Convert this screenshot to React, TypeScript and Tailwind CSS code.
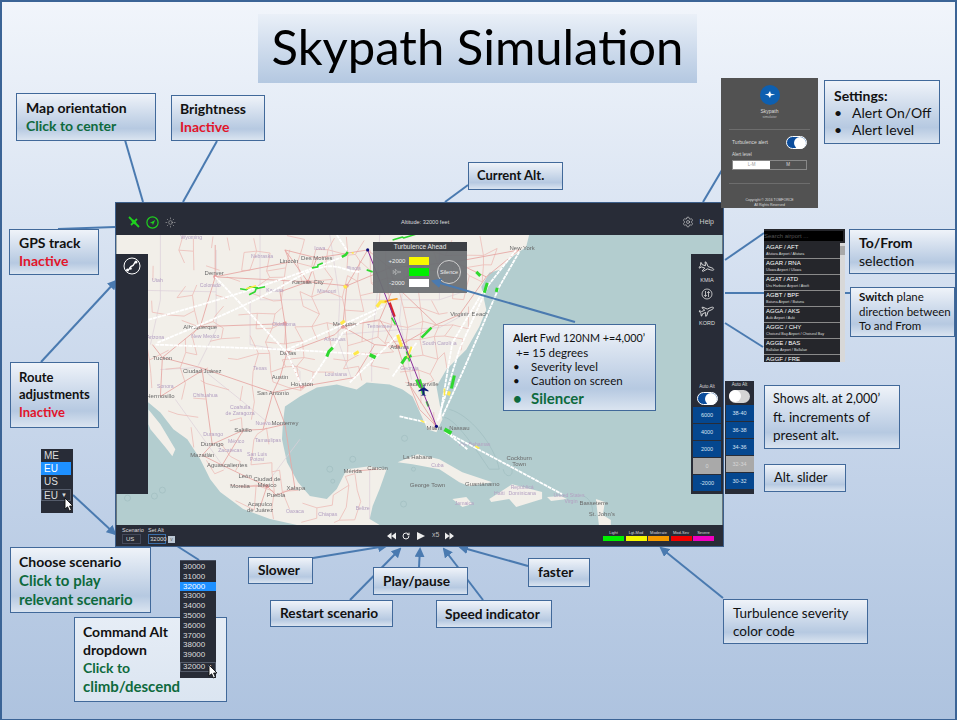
import type { ReactNode } from "react";
import { RotateCw, Settings, Sun } from "lucide-react";

const cities: Record<string, [number, number]> = {
  denver: [215, 277], lincoln: [290, 262], desmoines: [317, 258], kc: [308, 282], abq: [200, 327],
  tucson: [162, 358], phoenix: [152, 345], dallas: [287, 353], okc: [285, 324], austin: [280, 378],
  houston: [302, 387], sanantonio: [273, 393], juarez: [202, 371], hermosillo: [160, 397], saltillo: [243, 431],
  monterrey: [263, 430], durango: [212, 445], mazatlan: [202, 456], aguas: [222, 466], leon: [245, 477],
  mexico: [267, 487], morelia: [240, 487], puebla: [276, 496], xalapa: [295, 489], acapulco: [260, 508],
  reynosa: [285, 425], stlouis: [347, 286], memphis: [343, 327], nashville: [380, 320], atlanta: [398, 347],
  jax: [410, 385], neworleans: [355, 378], chicago: [368, 250], dc: [487, 277], ny: [520, 250],
  charlotte: [437, 325], raleigh: [460, 315], merida: [353, 472], cancun: [378, 470], miami: [437, 427],
  tampa: [420, 410], cheyenne: [215, 245], omaha: [285, 250], wichita: [280, 292], littlerock: [335, 335],
  birmingham: [375, 345], louisville: [395, 285], pittsburgh: [455, 262], columbus: [425, 265], indy: [390, 268],
  elpaso: [200, 368], slc: [135, 262],
};

const roads: [string, string][] = [
  ["denver", "cheyenne"], ["denver", "abq"], ["denver", "kc"], ["denver", "lincoln"], ["lincoln", "omaha"], ["omaha", "desmoines"],
  ["omaha", "kc"], ["desmoines", "chicago"], ["desmoines", "kc"], ["kc", "stlouis"], ["kc", "wichita"], ["wichita", "okc"], ["okc", "dallas"],
  ["okc", "abq"], ["abq", "tucson"], ["tucson", "phoenix"], ["tucson", "elpaso"], ["elpaso", "juarez"], ["elpaso", "sanantonio"], ["dallas", "austin"],
  ["austin", "sanantonio"], ["dallas", "houston"], ["houston", "sanantonio"], ["houston", "neworleans"], ["dallas", "littlerock"], ["littlerock", "memphis"],
  ["memphis", "stlouis"], ["memphis", "nashville"], ["memphis", "birmingham"], ["nashville", "atlanta"], ["birmingham", "atlanta"], ["neworleans", "birmingham"],
  ["atlanta", "charlotte"], ["atlanta", "jax"], ["jax", "tampa"], ["jax", "miami"], ["tampa", "miami"], ["charlotte", "raleigh"], ["raleigh", "dc"],
  ["dc", "ny"], ["dc", "pittsburgh"], ["pittsburgh", "columbus"], ["columbus", "indy"], ["indy", "stlouis"], ["indy", "chicago"], ["indy", "louisville"],
  ["louisville", "nashville"], ["louisville", "columbus"], ["stlouis", "chicago"], ["charlotte", "louisville"], ["pittsburgh", "ny"], ["sanantonio", "reynosa"],
  ["sanantonio", "monterrey"], ["monterrey", "saltillo"], ["saltillo", "durango"], ["durango", "mazatlan"], ["mazatlan", "aguas"], ["aguas", "leon"],
  ["leon", "mexico"], ["morelia", "mexico"], ["mexico", "puebla"], ["puebla", "xalapa"], ["mexico", "acapulco"], ["monterrey", "reynosa"], ["saltillo", "aguas"],
  ["hermosillo", "tucson"], ["hermosillo", "juarez"], ["juarez", "durango"], ["merida", "cancun"], ["reynosa", "xalapa"],
];

const borders = [
  "M116 290 L216 292 L216 250", "M160 235 L160 300 L150 345", "M216 292 L216 330 L198 366", "M260 235 L260 300 L290 300 L340 300",
  "M250 300 L250 345 L280 350 L300 372 L300 388", "M330 235 L340 300 L338 340 L352 380", "M160 370 L200 368 L240 400 L270 425 L283 425", "M380 235 L378 290 L372 345 L372 382",
  "M405 270 L400 320 L412 380", "M340 300 L440 300 L470 290", "M340 335 L400 330 L440 328 L470 312", "M440 250 L440 300",
  "M175 400 L225 470", "M300 440 L270 480", "M370 470 L370 520",
];

const tracks = [
  "M148 320 C 220 300 270 285 343 257", "M155 345 L287 350 L373 355", "M157 343 C 200 325 250 305 293 280 S 340 272 360 272",
  "M215 277 L287 353 L302 387", "M287 350 L383 307", "M310 383 L343 333 L377 313", "M350 383 L387 347 L400 333", "M393 377 L417 343",
  "M337 235 L347 250", "M440 420 L453 343 L483 293 L517 250", "M443 417 L463 373 L500 287 L520 252", "M438 422 L460 350 L490 283",
  "M445 432 L563 495", "M447 433 L468 450", "M400 417 L427 423",
];

const patches: { d: string; c: string; w?: number }[] = [
  { d: "M240 289 L246 290 L250 287 L258 288", c: "#2fd82f" }, { d: "M249 295 L255 292 L256 289 L265 287", c: "#2fd82f" }, { d: "M246 289 L256 286", c: "#ffe94a" },
  { d: "M312 268 L318 267 L318 265 L323 263", c: "#2fd82f" }, { d: "M342 257 L346 255 L348 252", c: "#2fd82f", w: 2.5 }, { d: "M352 253 L354 253", c: "#ffe94a" },
  { d: "M327 357 L329 352 L333 348", c: "#2fd82f", w: 3 }, { d: "M370 355 L376 358", c: "#2fd82f", w: 3.5 }, { d: "M393 240 L403 237 L404 238 L417 234", c: "#2fd82f" },
  { d: "M367 270 L373 272", c: "#2fd82f" }, { d: "M402 364 L406 358 L412 356", c: "#2fd82f", w: 3 }, { d: "M407 352 L410 362", c: "#2fd82f" },
  { d: "M417 380 L421 388", c: "#2fd82f", w: 3 }, { d: "M377 307 L381 302 L387 302", c: "#ffe94a", w: 3 }, { d: "M398 335 L402 347", c: "#ffe94a", w: 3 },
  { d: "M344 286 L347 288", c: "#ffe94a", w: 3 }, { d: "M341 324 L345 321", c: "#ffe94a", w: 3 }, { d: "M354 355 L359 352", c: "#ffe94a", w: 3 },
  { d: "M390 303 L395 317", c: "#d8232a", w: 2.5 }, { d: "M385 302 L392 300 L398 299", c: "#f59a1a" }, { d: "M392 318 L396 325", c: "#2fd82f" },
  { d: "M488 283 L485 293", c: "#2fd82f", w: 3 }, { d: "M498 288 L497 292", c: "#2fd82f", w: 3 }, { d: "M477 272 L481 276", c: "#2fd82f", w: 3 },
  { d: "M432 328 L422 338", c: "#2fd82f", w: 2.5 }, { d: "M455 376 L452 389", c: "#2fd82f", w: 3 }, { d: "M445 389 L445 396", c: "#ffe94a" },
  { d: "M450 392 L449 396", c: "#ffe94a", w: 3 }, { d: "M445 430 L452 434", c: "#2fd82f", w: 4 }, { d: "M420 380 L424 395", c: "#2fd82f", w: 3 },
  { d: "M427 402 L429 407", c: "#2fd82f", w: 2 }, { d: "M408 358 L412 347", c: "#ffe94a", w: 2 }, { d: "M421 421 L425 423", c: "#ffe94a" }, { d: "M476 447 L480 449", c: "#ffe94a" },
];

const labels: [string, number, number][] = [
  ["Denver", 214, 275], ["Lincoln", 289, 263], ["Des Moines", 317, 260], ["Kansas City", 308, 284], ["Albuquerque", 200, 329], ["Tucson", 162, 360],
  ["Dallas", 288, 355], ["Austin", 280, 380], ["Houston", 302, 387], ["San Antonio", 273, 396], ["Ciudad Juárez", 202, 373], ["Hermosillo", 160, 399],
  ["Saltillo", 243, 433], ["Monterrey", 285, 426], ["Durango", 212, 447], ["Mazatlán", 202, 458], ["Aguascalientes", 227, 468], ["León", 245, 479],
  ["Ciudad de", 267, 482], ["México", 267, 488], ["Morelia", 240, 489], ["Puebla", 276, 498], ["Xalapa", 296, 491], ["Acapulco", 260, 507], ["de Juárez", 260, 513],
  ["Mérida", 353, 474], ["Cancún", 378, 471], ["Memphis", 345, 326], ["Atlanta", 400, 349], ["Jacksonville", 423, 387], ["Miami", 435, 431],
  ["Virginia Beach", 470, 316], ["New York", 523, 250], ["Nassau", 460, 431], ["Cockburn", 520, 461], ["Town", 520, 467], ["La Habana", 418, 460], ["George Town", 428, 488],
  ["Guantánamo", 483, 487], ["Basseterre", 595, 506], ["St. John's", 603, 517],
];

const regions: [string, number, number][] = [
  ["Wyoming", 191, 239], ["Nebraska", 262, 258], ["Colorado", 210, 287], ["Utah", 157, 282], ["Kansas", 275, 292], ["New Mexico", 205, 338], ["Arizona", 155, 339],
  ["Oklahoma", 284, 326], ["Texas", 260, 370], ["Sonora", 165, 389], ["Chihuahua", 205, 398], ["Coahuila", 240, 410], ["de Zaragoza", 240, 416], ["Durango", 213, 437],
  ["México", 236, 444], ["Zacatecas", 230, 453], ["San Luis", 257, 457], ["Potosí", 257, 462], ["Tamaulipas", 268, 443], ["Nuevo", 263, 426], ["Chiapas", 328, 517],
  ["Oaxaca", 295, 514], ["Belize", 363, 511], ["Louisiana", 336, 376], ["Missouri", 327, 293], ["Iowa", 320, 250], ["Illinois", 354, 270], ["Cuba", 438, 468],
  ["Repúblicá", 523, 490], ["Dominicana", 523, 496], ["Haïti", 500, 496], ["Jamaica", 465, 506], ["The Bahamas", 475, 447], ["United States", 570, 498], ["Virgin", 572, 504],
  ["South Carolina", 440, 345], ["Tennessee", 380, 328], ["Georgia", 410, 370], ["Arkansas", 335, 341],
];

const landOutline: [number, number][] = [
  [116, 235], [530, 235], [527, 247], [513, 257], [500, 270], [490, 273], [482, 287], [487, 310], [480, 327], [467, 350], [447, 370], [437, 387], [443, 420], [437, 433],
  [428, 430], [420, 412], [413, 397], [403, 390], [390, 385], [367, 383], [357, 390], [337, 385], [317, 388], [300, 397], [285, 407], [283, 423], [282, 440], [287, 463],
  [298, 483], [310, 497], [327, 500], [337, 490], [347, 470], [370, 467], [387, 470], [380, 490], [373, 507], [370, 520], [380, 526], [297, 526], [270, 520], [243, 510],
  [220, 493], [210, 480], [200, 460], [187, 440], [173, 430], [160, 413], [148, 403], [116, 385],
];

function onLand(x: number, y: number) {
  let inside = false;
  for (let i = 0, j = landOutline.length - 1; i < landOutline.length; j = i++) {
    const [xi, yi] = landOutline[i];
    const [xj, yj] = landOutline[j];
    if (yi > y !== yj > y && x < ((xj - xi) * (y - yi)) / (yj - yi) + xi) inside = !inside;
  }
  return inside;
}

// minor road mesh, same every run
function buildMinorRoads() {
  let seed = 7;
  const rnd = () => {
    seed = (seed * 16807) % 2147483647;
    return seed / 2147483647;
  };
  const step = 15;
  const pts: [number, number][][] = [];
  for (let r = 0; r < 20; r++) {
    const row: [number, number][] = [];
    for (let c = 0; c < 27; c++) {
      row.push([150 + c * step + (rnd() - 0.5) * 11, 236 + r * step + (rnd() - 0.5) * 11]);
    }
    pts.push(row);
  }
  const out: string[] = [];
  const link = (a: [number, number], b: [number, number]) => {
    const chance = a[0] < 255 ? 0.32 : a[1] > 400 ? 0.5 : 0.72;
    if (rnd() > chance) return;
    if (!onLand(a[0], a[1]) || !onLand(b[0], b[1])) return;
    out.push(`M${a[0].toFixed(1)} ${a[1].toFixed(1)} L${b[0].toFixed(1)} ${b[1].toFixed(1)}`);
  };
  for (let r = 0; r < 20; r++) {
    for (let c = 0; c < 27; c++) {
      if (c < 26) link(pts[r][c], pts[r][c + 1]);
      if (r < 19) link(pts[r][c], pts[r + 1][c]);
    }
  }
  return out.join(" ");
}

const minorRoads = buildMinorRoads();
const landPath = "M" + landOutline.map((p) => p.join(" ")).join(" L") + " Z";

function FlightMap() {
  return (
    <svg viewBox="116 235 608 291" className="block h-full w-full blur-[0.3px]" fontFamily="'Liberation Sans', sans-serif">
      <rect x="116" y="235" width="608" height="291" fill="#b3cdcf" />
      <path fill="#f2efe9" d={landPath} />
      <path fill="#f2efe9" d="M148 410 L160 425 L175 450 L172 457 L165 448 L150 430 L148 425 Z" />
      <path fill="#f2efe9" d="M398 463 L418 455 L440 460 L463 473 L493 483 L470 487 L460 483 L440 470 L413 465 Z" />
      <path fill="#f2efe9" d="M490 500 L513 485 L543 493 L543 500 L517 508 L510 500 L492 503 Z" />
      <path fill="#f2efe9" d="M453 500 L467 498 L473 505 L463 508 Z" />
      <path fill="#f2efe9" d="M548 498 L562 497 L568 500 L552 502 Z" />
      <path fill="#f2efe9" d="M597 500 L606 503 L604 516 L612 521 L612 526 L600 526 Z" />
      {/* shallow water outlines */}
      <g fill="none" stroke="#a2bfc2" strokeWidth="0.8">
        <path d="M445 418 C 455 420 470 440 490 470 L 500 470 C 495 445 470 415 450 410" />
        <circle cx="154" cy="497" r="3" /><circle cx="162" cy="491" r="3" /><circle cx="127" cy="499" r="3" />
        <circle cx="330" cy="470" r="3" /><circle cx="333" cy="482" r="2" /><circle cx="353" cy="460" r="3" />
        <circle cx="405" cy="439" r="3" /><circle cx="414" cy="470" r="2" /><circle cx="404" cy="505" r="3" />
        <path d="M504 470 C 506 480 516 478 512 468" /><path d="M585 497 C 592 500 596 510 592 518" />
      </g>
      <g fill="none" stroke="#ddd0da" strokeWidth="0.7">
        {borders.map((d) => <path key={d} d={d} />)}
      </g>
      <path d={minorRoads} fill="none" stroke="#ecbcb8" strokeWidth="0.8" />
      <g fill="none" stroke="#e6a9a6" strokeWidth="0.9">
        {roads.map(([a, b]) => (
          <line key={a + b} x1={cities[a][0]} y1={cities[a][1]} x2={cities[b][0]} y2={cities[b][1]} />
        ))}
      </g>
      <g fill="#e59c9c">
        {["denver", "kc", "dallas", "houston", "mexico", "stlouis", "atlanta", "okc", "memphis"].map((c) => (
          <circle key={c} cx={cities[c][0]} cy={cities[c][1]} r="2" />
        ))}
      </g>
      <g fontSize="5.2" fill="#b3a0c2" textAnchor="middle">
        {regions.map(([t, x, y]) => <text key={t + x} x={x} y={y}>{t}</text>)}
      </g>
      <g fontSize="6" fill="#6a6a6a" textAnchor="middle">
        {labels.map(([t, x, y]) => <text key={t + x} x={x} y={y}>{t}</text>)}
      </g>
      <g fill="none" stroke="#fff" strokeWidth="1.8" strokeDasharray="4 0.7">
        {tracks.map((d) => <path key={d} d={d} />)}
      </g>
      <g fill="none" strokeWidth="1.6" strokeLinejoin="bevel">
        {patches.map((p) => <path key={p.d} d={p.d} stroke={p.c} strokeWidth={p.w ?? 1.6} />)}
      </g>
      <line x1="368" y1="250" x2="437" y2="427" stroke="#8a2c9a" strokeWidth="1" />
      <circle cx="368" cy="250" r="1.6" fill="#0b0b7a" />
      <circle cx="437" cy="427" r="1.6" fill="#0b0b7a" />
      <path d="M424 385 L424 388 L419 391 L419 392 L423 391 L423 395 L421 396 L424 396 L427 396 L425 395 L425 391 L429 392 L429 391 L425 388 L425 385 Z" fill="#101a78" />
    </svg>
  );
}

const planeShape =
  "M19 6.5 C19 5.5 17 5 15 5 L11 5 L7 .5 L5.5 .5 L7.5 5 L3 5 L1.5 3 L.5 3 L1.5 6.5 L.5 10 L1.5 10 L3 8 L7.5 8 L5.5 12.5 L7 12.5 L11 8 L15 8 C17 8 19 7.5 19 6.5 Z";

function PlaneOutline({ angle }: { angle: number }) {
  return (
    <svg viewBox="-1 -3 22 19" className="h-[15px] w-[18px]" fill="none" stroke="#e8e8e8" strokeWidth="1" strokeLinejoin="round">
      <path d={planeShape} transform={`rotate(${angle} 10 6.5)`} />
    </svg>
  );
}

function Cursor({ className }: { className: string }) {
  return (
    <svg viewBox="0 0 10 16" className={"absolute h-4 w-[10px] " + className}>
      <path d="M1 1 L1 12 L3.6 9.8 L5.4 14 L7.4 13 L5.6 9 L9 9 Z" fill="#fff" stroke="#111" strokeWidth="0.9" />
    </svg>
  );
}

function Callout({ className, flat, children }: { className: string; flat?: boolean; children: ReactNode }) {
  const fill = flat
    ? "bg-linear-to-b from-[#e6edf6] to-[#dbe5f1]"
    : "bg-linear-to-b from-[#eff3f9] via-[#b6c9e1] via-75% to-[#dae4f0]";
  return (
    <div className={"absolute flex flex-col justify-center border-[1.5px] border-[#41699a] font-['Lato',sans-serif] text-[#111] " + fill + " " + className}>
      {children}
    </div>
  );
}

function Red({ children }: { children: ReactNode }) {
  return <span className="font-bold text-[#e2152a]">{children}</span>;
}

function Green({ children }: { children: ReactNode }) {
  return <span className="font-bold text-[#0e6a3d]">{children}</span>;
}

function AltRow({ label, active }: { label: string; active?: boolean }) {
  return (
    <div
      className={
        active
          ? "flex h-4 w-7 items-center justify-center bg-[#a9a9a9] text-[5.5px] text-[#d6d6d6]"
          : "flex h-4 w-7 items-center justify-center bg-[#05478f] text-[5.5px] text-[#d8e4f2]"
      }
    >
      {label}
    </div>
  );
}

function Toggle({ on }: { on?: boolean }) {
  return (
    <div
      className={
        on
          ? "flex h-[13px] w-[21px] items-center justify-end rounded-full border border-white bg-[#0c4d9c]"
          : "flex h-[13px] w-[21px] items-center justify-start rounded-full bg-[#d4d4d4]"
      }
    >
      <div className="size-[12px] rounded-full bg-white" />
    </div>
  );
}

const connectors: { d: string; arrow?: boolean }[] = [
  { d: "M125 140 L143 202" }, { d: "M217 141 L183 202" }, { d: "M468 185 L445 202" }, { d: "M58 229 L115 227" },
  { d: "M41 362 L116 281", arrow: true }, { d: "M703 202 L722 170" }, { d: "M725 260 L764 233" }, { d: "M725 293 L764 293" }, { d: "M845 293 L850 293" },
  { d: "M725 323 L763 347" }, { d: "M73 495 L115 534", arrow: true }, { d: "M177 546 L199 560" },
  { d: "M313 558 L386 546", arrow: true }, { d: "M350 600 L400 549", arrow: true }, { d: "M419 567 L420 549", arrow: true },
  { d: "M483 600 L444 549", arrow: true }, { d: "M528 566 L460 547", arrow: true }, { d: "M723 598 L661 548", arrow: true },
];

const airports = [
  ["AGAF / AFT", "Afutara Airport / Afutara"], ["AGAR / RNA", "Ulawa Airport / Ulawa"], ["AGAT / ATD", "Uru Harbour Airport / Atoifi"], ["AGBT / BPF", "Batuna Airport / Batuna"],
  ["AGGA / AKS", "Auki Airport / Auki"], ["AGGC / CHY", "Choiseul Bay Airport / Choiseul Bay"], ["AGGE / BAS", "Ballalae Airport / Ballalae"], ["AGGF / FRE", ""],
];

const altList = ["30000", "31000", "32000", "33000", "34000", "35000", "36000", "37000", "38000", "39000"];

const severity = [
  ["Light", "bg-[#00f000]"], ["Lgt-Mod", "bg-[#f5f500]"], ["Moderate", "bg-[#f59a00]"], ["Mod-Sev", "bg-[#f00000]"], ["Severe", "bg-[#f000c0]"],
];

export default function App() {
  return (
    <div className="relative h-[720px] w-[957px] overflow-hidden border-x-2 border-t-2 border-b border-[#3b6496] bg-linear-to-b from-[#f1f5fb] via-[#cfdcee] via-45% to-[#aec3df]">
      <div className="absolute left-[256px] top-[12px] flex h-[69px] w-[439px] items-center justify-center whitespace-nowrap bg-linear-to-b from-[#eaf0f8] to-[#b4c8e1] pb-[3px] font-['Lato',sans-serif] text-[49px] text-black">
        Skypath Simulation
      </div>

      <svg viewBox="0 0 957 720" className="absolute -left-[2px] -top-[2px] h-[720px] w-[957px]">
        <defs>
          <marker id="head" viewBox="0 0 10 10" refX="8" refY="5" markerWidth="5" markerHeight="5" orient="auto">
            <path d="M0 0 L10 5 L0 10 Z" fill="#4a7ab0" />
          </marker>
        </defs>
        <g fill="none" stroke="#4a7ab0" strokeWidth="2">
          {connectors.map((c) => <path key={c.d} d={c.d} markerEnd={c.arrow ? "url(#head)" : undefined} />)}
        </g>
      </svg>

      <Callout className="left-[14px] top-[91px] h-[48px] w-[140px] pl-[9px] text-[14px] font-bold leading-[18px]">
        <span>Map orientation</span>
        <Green>Click to center</Green>
      </Callout>
      <Callout className="left-[169px] top-[93px] h-[46px] w-[94px] pl-[8px] text-[14px] font-bold leading-[18px]">
        <span>Brightness</span>
        <Red>Inactive</Red>
      </Callout>
      <Callout className="left-[466px] top-[160px] h-[28px] w-[95px] pl-[8px] text-[13px] font-bold">Current Alt.</Callout>
      <Callout className="left-[7px] top-[227px] h-[46px] w-[90px] pl-[9px] text-[14px] font-bold leading-[18px]">
        <span>GPS track</span>
        <Red>Inactive</Red>
      </Callout>
      <Callout className="left-[8px] top-[360px] h-[66px] w-[89px] pl-[8px] text-[13px] font-bold leading-[17.5px]">
        <span>Route</span>
        <span>adjustments</span>
        <Red>Inactive</Red>
      </Callout>

      {/* main app window */}
      <div className="absolute left-[113px] top-[200px] flex h-[345px] w-[609px] flex-col border border-[#3d5f8a] bg-[#282c37] font-['Liberation_Sans',sans-serif]">
        <div className="flex h-[32px] shrink-0 items-center justify-between pt-[6px] pl-[12px] pr-[9px]">
          <div className="flex items-center gap-[6px]">
            <svg viewBox="0 0 12 12" className="size-[12px]" stroke="#1fd11f" strokeWidth="1.8" fill="none">
              <path d="M1 1 L11 11 M3 9 L9 3" />
              <path d="M4.5 4.5 L7.5 7.5" strokeWidth="3" />
            </svg>
            <svg viewBox="0 0 13 13" className="size-[13px]" fill="none">
              <circle cx="6.5" cy="6.5" r="5.6" stroke="#1fd11f" strokeWidth="1.2" />
              <path d="M3.8 7 L9.2 4 L6.9 9.3 L6.3 7.3 Z" fill="#1fd11f" />
            </svg>
            <Sun className="size-[11px] text-[#bbb]" strokeWidth={1.2} />
          </div>
          <span className="absolute left-[285px] text-[5.6px] text-[#ddd]">Altitude: 32000 feet</span>
          <div className="flex items-center gap-[6px]">
            <Settings className="size-[12px] text-[#ddd]" strokeWidth={1.2} />
            <span className="text-[7px] text-[#ccc]">Help</span>
          </div>
        </div>

        <div className="relative min-h-0 flex-1">
          <FlightMap />

          <div className="absolute left-0 top-[19px] flex h-[240px] w-[32px] justify-center bg-[#282c37] pt-[3px]">
            <svg viewBox="0 0 18 18" className="size-[18px]" fill="none" stroke="#fff">
              <circle cx="9" cy="9" r="8" strokeWidth="1" />
              <path d="M4.5 13 C 7 13 6.5 9.5 9 9 C 11.5 8.5 10.5 5.5 13 5" strokeWidth="1.4" />
              <circle cx="4.5" cy="13" r="1.5" fill="#fff" stroke="none" />
              <circle cx="7.5" cy="11.5" r="1.3" fill="#fff" stroke="none" />
              <circle cx="13" cy="5" r="1.5" fill="#fff" stroke="none" />
            </svg>
          </div>

          <div className="absolute left-[257px] top-[7px] w-[94px] text-[#eee]">
            <div className="flex h-[9px] items-center justify-center bg-[#3d4045] text-[6.5px]">Turbulence Ahead</div>
            <div className="flex h-[42px] items-center bg-[#6d7074]/95 pl-[13px]">
              <div className="flex w-[22px] flex-col items-center gap-[3px] text-[6px] leading-[8px]">
                <span>+2000</span>
                <svg viewBox="-1 -3 22 19" className="h-[8px] w-[20px]" fill="none" stroke="#ddd" strokeWidth="1">
                  <path d={planeShape} />
                </svg>
                <span>-2000</span>
              </div>
              <div className="ml-[1px] flex flex-col gap-[3px]">
                <div className="h-[8px] w-[20px] bg-[#f8f800]" />
                <div className="h-[8px] w-[20px] bg-[#00f000]" />
                <div className="h-[8px] w-[20px] bg-white" />
              </div>
              <div className="ml-[8px] flex size-[24px] items-center justify-center rounded-full border border-[#cfcfcf] text-[5.5px]">Silence</div>
            </div>
          </div>

          <div className="absolute right-0 top-[19px] flex h-[240px] w-[32px] flex-col items-center bg-[#282c37] pt-[6px] text-[5.5px] text-[#ddd]">
            <PlaneOutline angle={18} />
            <span className="mt-[1px]">KMIA</span>
            <svg viewBox="0 0 12 12" className="mt-[4px] size-[12px]" fill="none" stroke="#ddd" strokeWidth="0.8">
              <circle cx="6" cy="6" r="5" />
              <path d="M4.5 3 L4.5 8.5 M3.2 7 L4.5 8.5 L5.8 7 M7.5 9 L7.5 3.5 M6.2 5 L7.5 3.5 L8.8 5" />
            </svg>
            <div className="mt-[3px]"><PlaneOutline angle={-24} /></div>
            <span className="mt-[1px]">KORD</span>
            <span className="mt-auto text-[4.5px]">Auto Alt</span>
            <div className="mt-[1px]"><Toggle on /></div>
            <div className="mb-[3px] mt-[2px] flex flex-col gap-[1px]">
              <AltRow label="6000" />
              <AltRow label="4000" />
              <AltRow label="2000" />
              <AltRow label="0" active />
              <AltRow label="-2000" />
            </div>
          </div>
        </div>

        <div className="relative flex h-[21px] shrink-0 items-center pl-[6px] pr-[9px] text-[#ddd]">
          <div className="flex flex-col text-[5.5px]">
            <div className="flex gap-[4px] leading-[7px]"><span className="w-[22px]">Scenario</span><span>Set Alt</span></div>
            <div className="flex items-center leading-[9px]">
              <span className="h-[10px] w-[19px] border border-[#44495a] pl-[3px] text-[6px]">US</span>
              <span className="ml-[7px] h-[10px] w-[18px] border border-[#3a6ea8] pl-[1px] text-[6px]">32000</span>
              <span className="ml-[2px] flex size-[7px] items-center justify-center bg-[#bcc8d4] text-[5px] text-[#666]">v</span>
            </div>
          </div>
          <div className="absolute left-[271px] flex items-center gap-[6px]">
            <svg viewBox="0 0 10 8" className="h-[8px] w-[9px] fill-[#eee]"><path d="M5 0 L0 4 L5 8 Z M10 0 L5 4 L10 8 Z" /></svg>
            <RotateCw className="size-[8px] text-[#eee]" strokeWidth={3} />
            <svg viewBox="0 0 8 8" className="ml-[1px] h-[8px] w-[8px] fill-[#eee]"><path d="M0 0 L8 4 L0 8 Z" /></svg>
            <span className="ml-[1px] text-[7px] text-[#bbb]">x5</span>
            <svg viewBox="0 0 10 8" className="h-[8px] w-[9px] fill-[#eee]"><path d="M0 0 L5 4 L0 8 Z M5 0 L10 4 L5 8 Z" /></svg>
          </div>
          <div className="ml-auto flex gap-[1.5px]">
            {severity.map(([name, color]) => (
              <div key={name} className="flex w-[21px] flex-col items-center">
                <span className="text-[4px] leading-[6px]">{name}</span>
                <div className={"h-[5px] w-full " + color} />
              </div>
            ))}
          </div>
        </div>
      </div>

      {/* second slider column */}
      <div className="absolute left-[723px] top-[379px] flex h-[113px] w-[29px] flex-col items-center bg-[#282c37] font-['Liberation_Sans',sans-serif] text-[4.5px] text-[#ddd]">
        <span className="mt-[1px]">Auto Alt</span>
        <div className="mt-[1px]"><Toggle /></div>
        <div className="mt-[2px] flex flex-col gap-[1px]">
          <AltRow label="38-40" />
          <AltRow label="36-38" />
          <AltRow label="34-36" />
          <AltRow label="32-34" active />
          <AltRow label="30-32" />
        </div>
      </div>

      {/* alert arrow runs over the map and the popup */}
      <svg viewBox="0 0 957 720" className="absolute -left-[2px] -top-[2px] h-[720px] w-[957px]">
        <path d="M575 322 L433 281" fill="none" stroke="#4a7ab0" strokeWidth="2" markerEnd="url(#head)" />
      </svg>

      <Callout className="left-[501px] top-[322px] h-[87px] w-[153px] pl-[9px] text-[11.5px] leading-[14px]">
        <span className="text-[10.8px]"><b>Alert</b> Fwd 120NM +=4,000’</span>
        <span className="mt-[1px] pl-[3px]">+= 15 degrees</span>
        <div className="flex"><span className="w-[18px]">•</span>Severity level</div>
        <div className="flex"><span className="w-[18px]">•</span>Caution on screen</div>
        <div className="mt-[3px] flex text-[15px]"><span className="w-[18px] font-bold text-[#0e6a3d]">•</span><Green>Silencer</Green></div>
      </Callout>

      {/* settings panel */}
      <div className="absolute left-[719px] top-[76px] flex h-[130px] w-[97px] flex-col items-center bg-[#525252] px-[8px] pt-[7px] font-['Liberation_Sans',sans-serif] text-[4.5px] text-[#ddd]">
        <div className="flex size-[20px] items-center justify-center rounded-full bg-[#0d5fb0]">
          <svg viewBox="0 0 12 8" className="h-[7px] w-[12px] fill-white"><path d="M0 4 L4 3 L6 0 L7 3 L12 4 L7 5 L6 8 L4 5 Z" /></svg>
        </div>
        <span className="mt-[3px] text-[5px]">Skypath</span>
        <span className="text-[3.5px] text-[#bbb]">simulator</span>
        <div className="mt-[9px] h-px w-full bg-[#6d6d6d]" />
        <div className="mt-[6px] flex w-full items-center justify-between pl-[3px] pr-[3px] text-[5px]"><span>Turbulence alert</span><Toggle on /></div>
        <span className="mt-[3px] w-full pl-[3px] text-[4.5px]">Alert level</span>
        <div className="mt-[1px] flex h-[10px] w-[75px] border border-[#888] text-[4.5px]">
          <span className="flex w-[37px] items-center justify-center bg-white text-[#999]">L-M</span>
          <span className="flex flex-1 items-center justify-center">M</span>
        </div>
        <div className="mt-[13px] h-px w-full bg-[#6d6d6d]" />
        <span className="mt-[14px] text-center text-[3.5px] leading-[5px]">Copyright © 2016 TOMFORCE<br />All Rights Reserved</span>
      </div>

      <Callout className="left-[822px] top-[78px] h-[64px] w-[116px] pl-[9px] text-[14px] leading-[17px]">
        <span className="font-bold">Settings:</span>
        <div className="flex"><span className="w-[18px]">•</span>Alert On/Off</div>
        <div className="flex"><span className="w-[18px]">•</span>Alert level</div>
      </Callout>

      {/* airport list */}
      <div className="absolute left-[762px] top-[227px] flex h-[133px] w-[81px] flex-col overflow-hidden bg-[#25262b] font-['Liberation_Sans',sans-serif] text-white">
        <div className="mt-[2px] h-[10px] w-[79px] bg-black text-[6px] leading-[10px] text-[#555]">Search airport ...</div>
        <div className="relative mt-[2px] flex flex-col">
          {airports.map(([code, name]) => (
            <div key={code} className="h-[16px] w-[76px] border-b border-[#8a8a8a] pl-[2px]">
              <div className="text-[6px] leading-[8px]">{code}</div>
              <div className="text-[3.7px] leading-[6px] text-[#ddd]">{name}</div>
            </div>
          ))}
          <div className="absolute right-0 top-0 h-full w-[5px] bg-[#d8d8d8]">
            <div className="mt-[3px] h-[9px] w-full bg-[#a8a8a8]" />
          </div>
        </div>
      </div>

      <Callout className="left-[847px] top-[227px] h-[45px] w-[107px] pl-[9px] text-[14px] leading-[18px]">
        <span className="font-bold">To/From</span>
        <span>selection</span>
      </Callout>
      <Callout className="left-[848px] top-[285px] h-[50px] w-[105px] pl-[8px] text-[11.5px] leading-[14.5px]">
        <span><b>Switch</b> plane</span>
        <span>direction between</span>
        <span>To and From</span>
      </Callout>
      <Callout className="left-[762px] top-[383px] h-[64px] w-[136px] pl-[8px] text-[13.5px] leading-[18px]">
        <span className="text-[12.5px]">Shows alt. at 2,000’</span>
        <span>ft. increments of</span>
        <span>present alt.</span>
      </Callout>
      <Callout className="left-[762px] top-[462px] h-[28px] w-[82px] pl-[9px] text-[13px]">Alt. slider</Callout>

      {/* scenario dropdown */}
      <div className="absolute left-[39px] top-[447px] h-[64px] w-[32px] bg-[#282c37] font-['Liberation_Sans',sans-serif] text-[10px] leading-[13px] text-[#ddd]">
        <div className="h-[13px] w-[30px] pl-[3px]">ME</div>
        <div className="h-[13px] w-[30px] bg-[#1e90ff] pl-[3px] text-white">EU</div>
        <div className="h-[13px] w-[30px] pl-[3px]">US</div>
        <div className="mt-[1px] flex h-[12px] w-[30px] items-center border border-[#555c6b] pl-[2px]">EU<span className="ml-[3px] text-[6px]">▼</span></div>
      </div>
      <Cursor className="left-[62px] top-[495px]" />

      <Callout className="left-[8px] top-[545px] h-[66px] w-[141px] pl-[8px] text-[14px] leading-[19px]">
        <span className="font-bold">Choose scenario</span>
        <span className="text-[15px]"><Green>Click to play</Green></span>
        <span className="text-[15px]"><Green>relevant scenario</Green></span>
      </Callout>

      <Callout flat className="left-[72px] top-[615px] h-[85px] w-[153px] pb-[2px] pl-[8px] text-[14px] leading-[18px]">
        <span className="font-bold">Command Alt</span>
        <span className="font-bold">dropdown</span>
        <Green>Click to</Green>
        <span className="text-[15px]"><Green>climb/descend</Green></span>
      </Callout>

      {/* alt dropdown */}
      <div className="absolute left-[178px] top-[558px] h-[118px] w-[36px] border-t border-[#4a5161] bg-[#282c37] pt-[1px] font-['Liberation_Sans',sans-serif] text-[8px] leading-[9.8px] text-[#ddd]">
        {altList.map((a) => (
          <div key={a} className={a === "32000" ? "h-[9.8px] bg-[#1e90ff] pl-[3px] text-white" : "h-[9.8px] pl-[3px]"}>{a}</div>
        ))}
        <div className="mt-[2px] flex h-[10px] items-center border border-[#555c6b] pl-[2px]">32000<span className="ml-[2px] text-[5px]">▼</span></div>
      </div>
      <Cursor className="left-[206px] top-[662px]" />

      <Callout className="left-[246px] top-[555px] h-[27px] w-[65px] pl-[9px] text-[13.7px] font-bold">Slower</Callout>
      <Callout className="left-[371px] top-[565px] h-[28px] w-[95px] pl-[9px] text-[13.7px] font-bold">Play/pause</Callout>
      <Callout className="left-[268px] top-[598px] h-[27px] w-[123px] pl-[9px] text-[13.7px] font-bold">Restart scenario</Callout>
      <Callout className="left-[434px] top-[598px] h-[28px] w-[116px] pl-[8px] text-[13.7px] font-bold">Speed indicator</Callout>
      <Callout className="left-[526px] top-[556px] h-[29px] w-[62px] pl-[9px] text-[13.7px] font-bold">faster</Callout>
      <Callout className="left-[721px] top-[597px] h-[45px] w-[145px] pl-[9px] text-[13.5px] leading-[18px]">
        <span>Turbulence severity</span>
        <span>color code</span>
      </Callout>
    </div>
  );
}
